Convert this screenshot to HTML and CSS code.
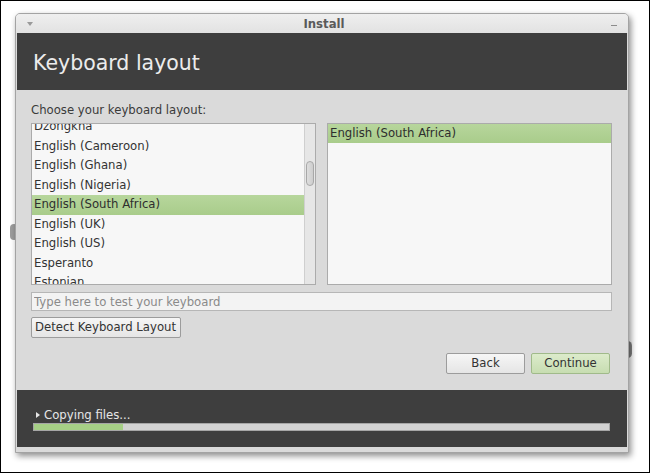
FILE: index.html
```html
<!DOCTYPE html>
<html>
<head>
<meta charset="utf-8">
<link rel="stylesheet" href="styles.css">
</head>
<body>
<div class="screen">
  <span class="bump bump-left"></span>
  <span class="bump bump-right"></span>
  <div class="window">
    <div class="titlebar">
      <span class="menu-tri"></span>
      <span class="title">Install</span>
      <span class="minimize"></span>
    </div>
    <div class="banner"><h1 class="banner-title">Keyboard layout</h1></div>
    <div class="content">
      <div class="label">Choose your keyboard layout:</div>
      <div class="lists">
        <div class="list list-left">
          <div class="rows rows-scrolled">
            <div class="row">Dzongkha</div>
            <div class="row">English (Cameroon)</div>
            <div class="row">English (Ghana)</div>
            <div class="row">English (Nigeria)</div>
            <div class="row sel">English (South Africa)</div>
            <div class="row">English (UK)</div>
            <div class="row">English (US)</div>
            <div class="row">Esperanto</div>
            <div class="row">Estonian</div>
          </div>
          <div class="scrollbar"><div class="thumb"></div></div>
        </div>
        <div class="list list-right">
          <div class="rows">
            <div class="row sel">English (South Africa)</div>
          </div>
        </div>
      </div>
      <input class="test" type="text" placeholder="Type here to test your keyboard">
      <div class="detect-row"><button class="btn detect">Detect Keyboard Layout</button></div>
      <div class="nav">
        <button class="btn nav-btn">Back</button>
        <button class="btn nav-btn primary">Continue</button>
      </div>
    </div>
    <div class="footer">
      <div class="status"><span class="expander"></span>Copying files...</div>
      <div class="progress"><div class="fill" style="width:15.4%"></div></div>
    </div>
  </div>
</div>
</body>
</html>
```

FILE: styles.css
```css
* { box-sizing: border-box; }
html, body { margin: 0; padding: 0; background: #fff; }
body { font-family: "DejaVu Sans", "Liberation Sans", sans-serif; }

.screen {
  width: 650px;
  height: 473px;
  border: 1px solid #000;
  background: #fff;
  padding: 12px 0 0 14px;
  position: relative;
  overflow: hidden;
}

.bump {
  position: absolute;
  background: #9c9c9c;
  border-radius: 4px;
}
.bump-left { left: 9px; top: 223px; width: 8px; height: 16px; }
.bump-right { left: 622px; top: 340px; width: 9px; height: 17px; border-radius: 8px; background: #858585; }

.window {
  position: relative;
  width: 614px;
  border: 1px solid #a3a3a3;
  border-radius: 5px 5px 0 0;
  background: #dadada;
  padding: 0 1px 5px 1px;
  box-shadow: 2px 3px 6px rgba(0,0,0,0.45);
}

.titlebar {
  height: 19px;
  margin: 0 -1px;
  display: flex;
  align-items: center;
  padding: 1px 11px 0 11px;
  background: linear-gradient(#efefef, #e2e2e2);
  border-radius: 4px 4px 0 0;
}
.menu-tri {
  width: 0; height: 0;
  border-left: 3px solid transparent;
  border-right: 3px solid transparent;
  border-top: 4px solid #9a9a9a;
}
.title {
  flex: 1;
  text-align: center;
  font-weight: bold;
  font-size: 11.7px;
  color: #5a5a5a;
  padding-left: 4px;
}
.minimize {
  width: 6px; height: 1px;
  margin-top: 3px;
  background: #8c8c8c;
}

.banner {
  height: 57px;
  background: #3e3e3e;
  padding: 18px 0 0 16px;
}
.banner-title {
  margin: 0;
  font-weight: normal;
  font-size: 20.5px;
  line-height: 24px;
  color: #ececec;
}

.content {
  padding: 12px 14px 16px 14px;
  display: flex;
  flex-direction: column;
  font-size: 11.7px;
  color: #333;
}
.label {
  line-height: 16px;
  height: 16px;
  margin-bottom: 5px;
  color: #3a3a3a;
}

.lists {
  display: grid;
  grid-template-columns: 285px 285px;
  column-gap: 11px;
}
.list {
  height: 162px;
  border: 1px solid #ababab;
  background: #f7f7f7;
  overflow: hidden;
  display: flex;
}
.rows { flex: 1; min-width: 0; }
.rows-scrolled { margin-top: -7px; }
.row {
  height: 19.5px;
  line-height: 19.5px;
  padding-left: 2px;
  white-space: nowrap;
  color: #333;
}
.list-right .row { height: 19px; line-height: 19px; }
.row.sel {
  background: linear-gradient(#b7d69c, #a9cc8b);
  color: #2e2e2e;
}
.scrollbar {
  width: 11px;
  flex: none;
  background: #e6e6e6;
  border-left: 1px solid #cfcfcf;
  padding: 37px 0 0 1px;
}
.thumb {
  width: 8px;
  height: 25px;
  border: 1px solid #a8a8a8;
  border-radius: 4px;
  background: linear-gradient(90deg, #dedede, #cdcdcd);
}

.test {
  margin: 7px 1px 0 0;
  height: 19px;
  border: 1px solid #b6b6b6;
  background: #f3f3f3;
  font-family: inherit;
  font-size: 11.7px;
  padding: 0 2px;
  color: #333;
  outline: none;
}
.test::placeholder { color: #8a8a8a; }

.btn {
  font-family: inherit;
  font-size: 11.7px;
  color: #333;
  height: 21px;
  border: 1px solid #9c9c9c;
  border-radius: 2px;
  background: linear-gradient(#f6f6f6, #e5e5e5);
  padding: 0 3px;
  margin: 0;
  line-height: 19px;
}
.detect-row { margin-top: 6px; display: flex; }
.detect { width: 150px; text-align: left; }

.nav {
  margin-top: 15px;
  margin-right: 3px;
  display: flex;
  justify-content: flex-end;
  gap: 6px;
}
.nav-btn { width: 79px; text-align: center; }
.nav-btn.primary {
  background: linear-gradient(#dcebcb, #c7ddb1);
  border-color: #a0ba8a;
}

.footer {
  height: 57px;
  background: #3e3e3e;
  padding: 17px 17px 0 16px;
}
.status {
  height: 16px;
  line-height: 16px;
  font-size: 11.7px;
  color: #e6e6e6;
  padding-left: 3px;
  display: flex;
  align-items: center;
}
.expander {
  width: 0; height: 0;
  border-top: 3.5px solid transparent;
  border-bottom: 3.5px solid transparent;
  border-left: 4px solid #e6e6e6;
  margin-right: 4px;
}
.progress {
  height: 8px;
  background: #d2d2d2;
  border: 1px solid #a6a6a6;
}
.fill {
  height: 100%;
  background: #a6cf86;
}
```
